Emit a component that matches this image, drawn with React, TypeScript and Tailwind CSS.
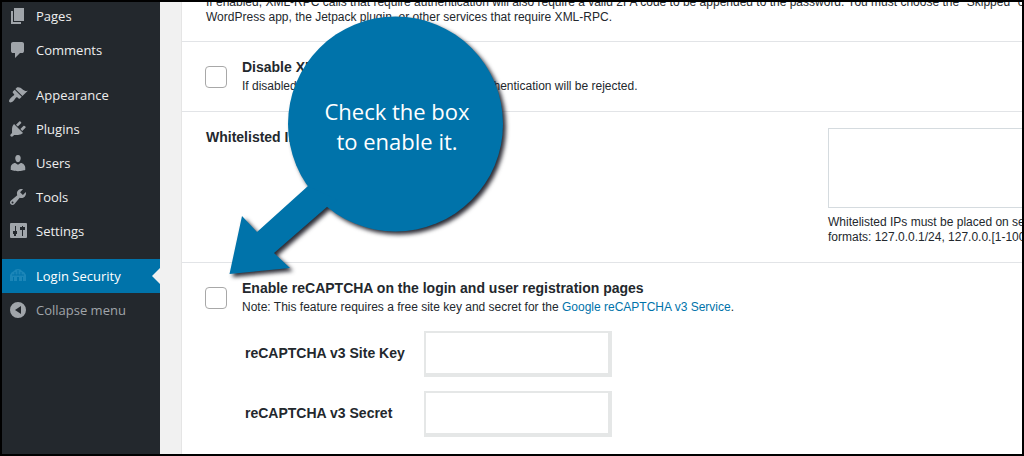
import type { ReactNode } from "react";

type IconProps = { children: ReactNode; className?: string };

function Icon({ children, className = "text-[#a0a5aa]" }: IconProps) {
  return (
    <svg viewBox="0 0 20 20" className={`size-5 shrink-0 fill-current ${className}`} aria-hidden="true">
      {children}
    </svg>
  );
}

type Item = { label: string; icon: ReactNode };

const contentItems: Item[] = [
  { label: "Pages", icon: <path d="M6 15V2h10v13H6zm-1 1h8v2H3V5h2v11z" /> },
  {
    label: "Comments",
    icon: (
      <path d="M5 2h9q.82 0 1.41.59T16 4v7q0 .82-.59 1.41T14 13h-2l-5 5v-5H5q-.82 0-1.41-.59T3 11V4q0-.82.59-1.41T5 2z" />
    ),
  },
];

const adminItems: Item[] = [
  {
    label: "Appearance",
    icon: (
      <path d="M14.48 11.06L7.41 3.99l1.5-1.5c.5-.56 2.3-.47 3.51.32 1.21.8 1.43 1.28 2.91 2.1 1.18.64 2.45 1.26 4.45.85zm-.71.71L6.7 4.7 4.93 6.47c-.39.39-.39 1.02 0 1.41l1.06 1.06c.39.39.39 1.03 0 1.42-.6.6-1.43 1.11-2.21 1.69-.35.26-.7.53-1.01.84C1.43 14.23.4 16.08 1.4 17.07c.99 1 2.84-.03 4.18-1.36.31-.31.58-.66.85-1.02.57-.78 1.08-1.61 1.69-2.21.39-.39 1.02-.39 1.41 0l1.06 1.06c.39.39 1.02.39 1.41 0z" />
    ),
  },
  {
    label: "Plugins",
    icon: (
      <path d="M13.11 4.36L9.87 7.6 8 5.73l3.24-3.24c.35-.34 1.05-.2 1.56.32.52.51.66 1.21.31 1.55zm-8 1.77l.91-1.12 9.01 9.01-1.19.84c-.71.71-2.63 1.16-3.82 1.16H6.14L4.9 17.26c-.59.59-1.54.59-2.12 0-.59-.58-.59-1.53 0-2.12l1.24-1.24v-3.88c0-1.13.4-3.19 1.09-3.89zm7.26 3.97l3.24-3.24c.34-.35 1.04-.21 1.55.31.52.51.66 1.21.31 1.55l-3.24 3.25z" />
    ),
  },
  {
    label: "Users",
    icon: (
      <path d="M10 9.25c-2.27 0-2.73-3.44-2.73-3.44C7 4.02 7.82 2 9.97 2c2.16 0 2.98 2.02 2.71 3.81 0 0-.41 3.44-2.68 3.44zm0 2.57L12.72 10c2.39 0 4.52 2.33 4.52 4.53v2.49s-3.65 1.13-7.24 1.13c-3.65 0-7.24-1.13-7.24-1.13v-2.49c0-2.25 1.94-4.48 4.47-4.48z" />
    ),
  },
  {
    label: "Tools",
    icon: (
      <path d="M16.68 9.77c-1.34 1.34-3.3 1.67-4.95.99l-5.41 6.52c-.99.99-2.59.99-3.58 0s-.99-2.59 0-3.57l6.52-5.42c-.68-1.65-.35-3.61.99-4.95 1.28-1.28 3.12-1.62 4.72-1.06l-2.89 2.89 2.82 2.82 2.86-2.87c.53 1.58.18 3.39-1.08 4.65zM3.81 16.21c.4.39 1.04.39 1.43 0 .4-.4.4-1.04 0-1.43-.39-.4-1.03-.4-1.43 0-.39.39-.39 1.03 0 1.43z" />
    ),
  },
  {
    label: "Settings",
    icon: (
      <path
        fillRule="evenodd"
        d="M3 2h15q1 0 1 1v13q0 1-1 1H3q-1 0-1-1V3q0-1 1-1zM7 5v5H5v3h4v-3H8V5H7zM6 13v2h2v-2zM14 5v1h-2v3h2v6h1V9h2V6h-2V5z"
      />
    ),
  },
];

function MenuGroup({ items }: { items: Item[] }) {
  return (
    <ul>
      {items.map((item) => (
        <li key={item.label}>
          <a href="#" className="flex h-[34px] items-center gap-2 pl-1.5 text-[#eeeeee]">
            <Icon>{item.icon}</Icon>
            {item.label}
          </a>
        </li>
      ))}
    </ul>
  );
}

function Sidebar() {
  return (
    <nav className="-mt-[3px] flex w-[158px] shrink-0 flex-col gap-[11px] bg-[#23282d] font-['Open_Sans',sans-serif] text-[13px] leading-[18px]">
      <MenuGroup items={contentItems} />
      <MenuGroup items={adminItems} />
      <div>
        <a href="#" aria-current="page" className="relative flex h-[34px] items-center gap-2 bg-[#0073aa] pl-1.5 text-white">
          <Icon className="text-[#1c86b8]">
            <path d="M2 9q1-3 4-4 1-2 4-2t4 2q3 1 4 4v6h-3v-4h-1v4h-3v-4H9v4H6v-4H5v4H2z" />
            <path d="M4 9h12M7 6v3M10 4v5M13 6v3" className="fill-none stroke-[#0073aa]" />
          </Icon>
          Login Security
          <svg viewBox="0 0 8 16" className="absolute top-[9px] right-0 h-4 w-2 fill-[#f1f1f1]" aria-hidden="true">
            <path d="M8 0v16L0 8z" />
          </svg>
        </a>
        <button type="button" className="flex h-[34px] w-full items-center gap-2 pl-1.5 text-[#a0a5aa]">
          <Icon>
            <path fillRule="evenodd" d="M10 2a8 8 0 1 1 0 16 8 8 0 0 1 0-16zM13 6v8l-6-4z" />
          </Icon>
          Collapse menu
        </button>
      </div>
    </nav>
  );
}

function Checkbox({ id }: { id: string }) {
  return (
    <input
      id={id}
      type="checkbox"
      className="mt-[9px] size-[22px] shrink-0 appearance-none rounded-[4px] border border-[#a8a8a8] bg-white checked:bg-[#0073aa]"
    />
  );
}

function KeyField({ id, label }: { id: string; label: string }) {
  return (
    <div className="flex items-center">
      <label htmlFor={id} className="w-[179px] shrink-0 pb-0.5 text-sm font-bold">
        {label}
      </label>
      <input
        id={id}
        type="text"
        className="h-[46px] w-[188px] border-2 border-r-4 border-b-4 border-[#e5e7e7] bg-white px-2 outline-none"
      />
    </div>
  );
}

function Callout() {
  return (
    <div className="pointer-events-none absolute top-3.5 left-[226px] h-[262px] w-[284px]">
      <svg
        viewBox="228 16 284 262"
        className="absolute inset-0 size-full overflow-visible fill-[#0073aa] drop-shadow-[3px_3px_2px_rgba(20,20,30,0.9)]"
        aria-hidden="true"
      >
        <circle cx="395.500" cy="124" r="107.500" />
        <path d="M229.500 274L242 216l15 16L308 186l30 14-10 6L274 253l16 15z" />
      </svg>
      <p className="relative mt-20 ml-[60px] w-[218px] text-center font-['Open_Sans',sans-serif] text-[22px] leading-[30px] text-white">
        Check the box
        <br />
        to enable it.
      </p>
    </div>
  );
}

export default function App() {
  return (
    <div className="relative flex min-h-screen overflow-hidden border-2 border-black bg-[#f1f1f1] font-['Liberation_Sans',sans-serif] text-xs leading-[15px] text-[#23282d]">
      <Sidebar />
      <main className="ml-[21px] min-w-0 flex-1 overflow-hidden border-l border-[#e5e5e5] bg-white">
        <section className="-mt-[7px] border-b border-[#e2e4e7] pb-4 pl-6 whitespace-nowrap">
          <p>
            If enabled, XML-RPC calls that require authentication will also require a valid 2FA code to be appended to
            the password. You must choose the "Skipped" option
            <br />
            WordPress app, the Jetpack plugin, or other services that require XML-RPC.
          </p>
        </section>

        <section className="flex gap-[15px] border-b border-[#e2e4e7] pt-[15px] pb-[17px] pl-[23px]">
          <Checkbox id="disable-xmlrpc" />
          <div>
            <label htmlFor="disable-xmlrpc" className="block text-sm font-bold">
              Disable XML-RPC authentication
            </label>
            <p className="mt-0.5">If disabled, XML-RPC requests that attempt authentication will be rejected.</p>
          </div>
        </section>

        <section className="grid grid-cols-[minmax(0,622px)_minmax(194px,1fr)] border-b border-[#e2e4e7] pt-4 pb-[17px] pl-6">
          <label htmlFor="whitelist" className="text-sm leading-[18px] font-bold">
            Whitelisted IPs
          </label>
          <div className="whitespace-nowrap">
            <textarea id="whitelist" className="block h-20 w-[320px] resize-none border border-[#d5dbdf] bg-white p-2 outline-none" />
            <p className="mt-[7px]">
              Whitelisted IPs must be placed on separate lines
              <br />
              formats: 127.0.0.1/24, 127.0.0.[1-100]
            </p>
          </div>
        </section>

        <section className="flex gap-[15px] pt-[15px] pb-4 pl-[23px]">
          <Checkbox id="enable-recaptcha" />
          <div>
            <label htmlFor="enable-recaptcha" className="block text-sm font-bold">
              Enable reCAPTCHA on the login and user registration pages
            </label>
            <p className="mt-0.5">
              Note: This feature requires a free site key and secret for the{" "}
              <a href="#" className="text-[#0073aa]">
                Google reCAPTCHA v3 Service
              </a>
              .
            </p>
            <div className="mt-4 flex flex-col gap-3.5 pl-[3px]">
              <KeyField id="site-key" label="reCAPTCHA v3 Site Key" />
              <KeyField id="secret" label="reCAPTCHA v3 Secret" />
            </div>
          </div>
        </section>
      </main>
      <Callout />
    </div>
  );
}
